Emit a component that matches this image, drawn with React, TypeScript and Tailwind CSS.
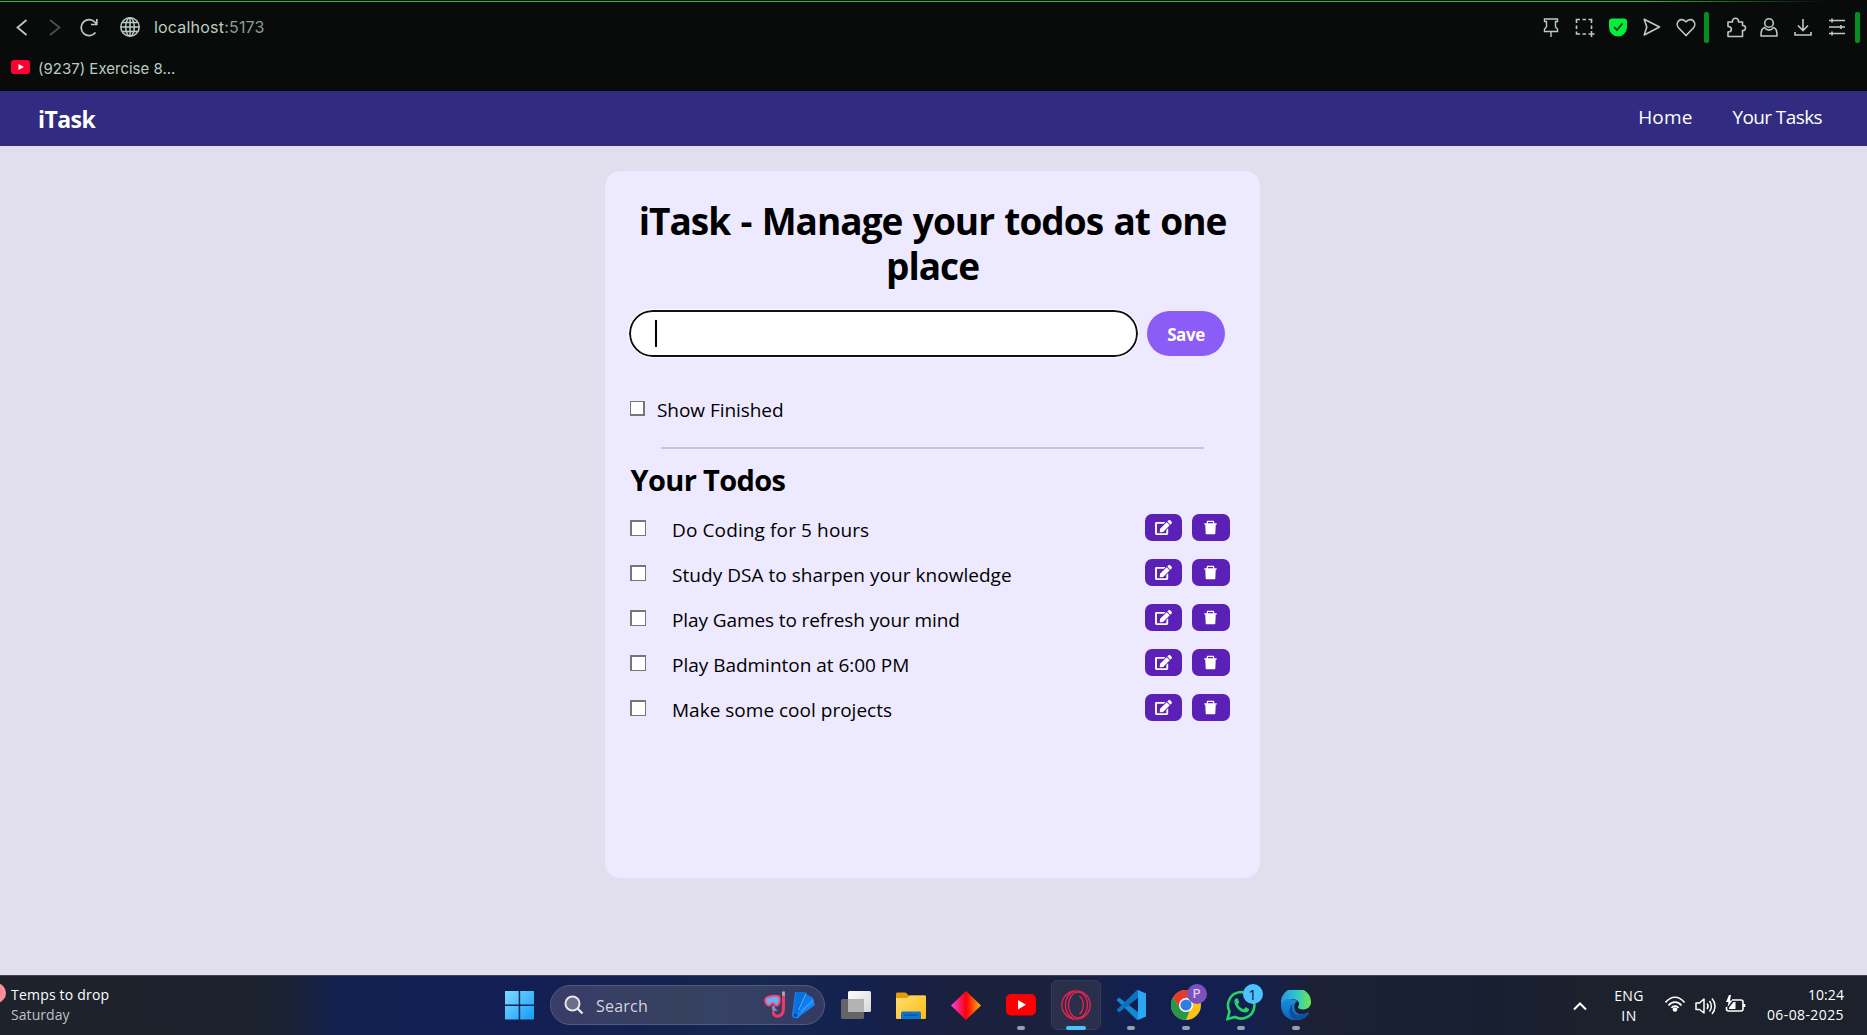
import React from "react";
import { FaEdit } from "react-icons/fa";
import { AiFillDelete } from "react-icons/ai";

const SANS = "font-['Open_Sans',sans-serif]";

const todos = [
  { text: "Do Coding for 5 hours", cls: "tracking-[0.12px]" },
  { text: "Study DSA to sharpen your knowledge", cls: "tracking-[0.04px]" },
  { text: "Play Games to refresh your mind", cls: "tracking-[-0.1px]" },
  { text: "Play Badminton at 6:00 PM", cls: "tracking-[-0.02px]" },
  { text: "Make some cool projects", cls: "tracking-[0.01px]" },
];

function Line({ children, className = "", w = 24, h = 24, sw = 1.4 }: { children: React.ReactNode; className?: string; w?: number; h?: number; sw?: number }) {
  return (
    <svg width={w} height={h} viewBox={`0 0 ${w} ${h}`} fill="none" stroke="currentColor" strokeWidth={sw} className={`shrink-0 ${className}`}>
      {children}
    </svg>
  );
}

function BrowserBar() {
  return (
    <header className="h-[91px] bg-[#080b0a] text-[#bccbc2] font-['Inter',sans-serif] flex flex-col">
      <div className="h-px" />
      <div className="h-px bg-linear-to-r from-[#13c53a] from-88% to-[#080b0a] to-98%" />
      <div className="h-[50px] flex items-center pl-[10px]">
        <Line sw={1.8}><path d="M16.500 5L7.500 12.500L16.500 20" /></Line>
        <Line className="ml-2 text-[#4a504d]" sw={1.8}><path d="M8 5L17.500 12.500L8 20" /></Line>
        <Line className="ml-[11px]" sw={1.7}><path d="M18.500 17.500A8 8 0 1 1 18.300 7.500L19.500 9M19.800 4V9.500H14" /></Line>
        <Line className="ml-[17px]" sw={1.5}>
          <circle cx="12" cy="12" r="9.200" />
          <ellipse cx="12" cy="12" rx="4.300" ry="9.200" />
          <path d="M12 2.800V21.200M3 12H21M4.300 7.500H19.700M4.300 16.500H19.700" />
        </Line>
        <span className="ml-[12px] text-[16px] tracking-[0.2px] leading-6">localhost<span className="text-[#8a9e92]">:5173</span></span>
        <div className="ml-auto flex items-center pr-[7px]">
          <Line className="mr-[10px]"><path d="M5.500 4H18.500V6.500H16.500V12L18.500 14V16.500H5.500V14L7.500 12V6.500H5.500ZM12 16.500V22" /></Line>
          <Line className="mr-[9px]" sw={1.6}><path d="M3.500 8V4.500H7M9.500 4.500H13M15.500 4.500H18.500V8M18.500 10.500V14M3.500 10.500V14M3.500 16.500V19H7M9.500 19H13M18.500 16V22M15.500 19H21.500" /></Line>
          <Line className="mr-[10px]">
            <path d="M6 3.500H18A3 3 0 0 1 21 6.500V12A9 9.500 0 0 1 3 12V6.500A3 3 0 0 1 6 3.500Z" fill="#00f03c" stroke="none" />
            <path d="M8 12L11 15L16.500 8.500" stroke="#0b2a13" strokeWidth="1.700" />
          </Line>
          <Line className="mr-[10px]" sw={1.6}><path d="M4.200 4.200L19.500 12L4.200 20L6.800 12Z" strokeLinejoin="round" /></Line>
          <Line className="mr-[6px]" sw={1.6}><path d="M12 20.500L4.500 12.800C0.500 8 6.500 1 12 6.800C17.500 1 23.500 8 19.500 12.800Z" /></Line>
          <div className="w-[5px] h-[31px] rounded-[2px] bg-[#048f22] mr-[15px]" />
          <Line className="mr-[9px]" sw={1.6}><path d="M4 7H8.500C7.500 2 15.500 2 14.500 7H18.500V10.500C22.500 10 22.500 16 18.500 15.500V21.500H4V17C8.500 17 8.500 11.500 4 11.500Z" strokeLinejoin="round" /></Line>
          <Line className="mr-[10px]" sw={1.6}><circle cx="12" cy="8" r="4.300" /><path d="M7.500 12.500C5 13.500 4 15 4 21H20C20 15 19 13.500 16.500 12.500C14 16 10 16 7.500 12.500Z" strokeLinejoin="round" /></Line>
          <Line className="mr-[10px]" sw={1.6}><path d="M12 4V15M7 10.500L12 15.500L17 10.500M4 17V20H20V17" /></Line>
          <Line className="mr-[6px]" sw={1.6}><path d="M4 5.500H20M4 12H20M4 18.500H20M7 3.500V7.500M16 10V14M7 16.500V20.500" /></Line>
          <div className="w-[5px] h-[31px] rounded-[2px] bg-[#048f22]" />
        </div>
      </div>
      <div className="h-[34px] flex items-center pl-[11px]">
        <div className="w-[19px] h-[14px] mb-[4px] rounded-[3px] bg-[#ff0033] flex items-center justify-center">
          <svg width="6" height="6" viewBox="0 0 6 6"><path d="M0.500 0L6 3L0.500 6Z" fill="#fff" /></svg>
        </div>
        <span className="ml-2 text-[15px] leading-6">(9237) Exercise 8...</span>
      </div>
    </header>
  );
}

function NavBar() {
  return (
    <nav className={`h-[55px] bg-[#312c81] text-white flex items-center justify-between pl-[38px] pr-[45px] ${SANS}`}>
      <span className="font-bold text-[23px] tracking-[-0.54px] leading-[30px] pt-[1px]">iTask</span>
      <div className="flex gap-10 text-[19px] leading-[26px] pb-[3px]">
        <span className="tracking-[0.16px]">Home</span>
        <span className="tracking-[-0.6px]">Your Tasks</span>
      </div>
    </nav>
  );
}

function TodoCard() {
  return (
    <section className={`w-[655px] h-[707px] mx-auto mt-[25px] rounded-[15px] bg-[#ede9fe] text-black px-[25px] pt-[27px] -translate-x-[1px] ${SANS}`}>
      <h1 className="text-center font-bold text-[37px] leading-[45px] tracking-[-0.98px] [word-spacing:1.7px] whitespace-nowrap">
        iTask - Manage your todos at one
        <br />
        place
      </h1>
      <div className="mt-[22px] flex items-center h-[47px]">
        <div className="w-[509px] -ml-px h-[47px] rounded-full border-2 border-[#101010] bg-white flex items-center pl-[24px] outline outline-white">
          <div className="w-[2px] h-[27px] bg-black" />
        </div>
        <button className="ml-[9px] w-[78px] h-[45px] rounded-full bg-[#8b5cf6] text-white font-bold text-[17px] tracking-[-0.43px] pt-[2px]">Save</button>
      </div>
      <label className="mt-[37px] h-[30px] flex items-center">
        <span className="w-[15px] h-[15px] -mt-px border border-r-2 border-b-2 border-[#767676] bg-white" />
        <span className="ml-[12px] pt-[2px] text-[19px] leading-[30px] tracking-[-0.05px]">Show Finished</span>
      </label>
      <div className="mt-[23px] ml-[31px] w-[543px] h-[2px] bg-[#c9c5d9]" />
      <h2 className="mt-[8px] font-bold text-[29px] leading-[45px] tracking-[-0.65px] pl-[0.5px]">Your Todos</h2>
      <ul className="mt-[12px] flex flex-col gap-[15px]">
        {todos.map((t) => (
          <li key={t.text} className="h-[30px] flex items-start">
            <span className="mt-[6px] w-[16px] h-[16px] border border-t-2 border-l-2 border-[#767676] bg-white" />
            <span className={`ml-[26px] mt-px text-[19px] leading-[30px] ${t.cls}`}>{t.text}</span>
            <div className="ml-auto mr-[5px] flex gap-[10px] text-white">
              <button className="w-[37px] h-[27px] rounded-[7px] bg-[#5b21b6] flex items-center justify-center">
                <FaEdit className="w-[17px] h-[15px]" />
              </button>
              <button className="w-[38px] h-[27px] rounded-[7px] bg-[#5b21b6] flex items-center justify-center pr-[2px]">
                <AiFillDelete className="size-[17px]" />
              </button>
            </div>
          </li>
        ))}
      </ul>
    </section>
  );
}

function Slot({ children, running, active }: { children: React.ReactNode; running?: boolean; active?: boolean }) {
  return (
    <div className="w-[55px] h-[60px] flex justify-center">
      <div className={`relative w-[50px] h-[50px] mt-[4px] rounded-[6px] flex items-center justify-center ${active ? "bg-[#2a2f4c] border border-[#363b57]" : ""}`}>
        {children}
        {running && <span className="absolute bottom-0 left-1/2 -translate-x-1/2 w-[8px] h-[4px] rounded-full bg-[#9a9dac]" />}
        {active && <span className="absolute -bottom-px left-1/2 -translate-x-1/2 w-[20px] h-[4px] rounded-full bg-[#4cc2ff]" />}
      </div>
    </div>
  );
}

function Diving() {
  return (
    <svg width="52" height="28" viewBox="0 0 52 28" fill="none">
      <path d="M20.500 4V17C20.500 27.500 10.500 26.500 10.300 21.500" stroke="#f0386b" strokeWidth="3" strokeLinecap="round" />
      <path d="M20.500 0.500V4.500" stroke="#b9a5bd" strokeWidth="2.800" />
      <path d="M3 7C6 5 13 4 16 5.500C18 9 16 14.500 13.500 14.500C11.500 14.500 11 11.800 9.500 12C8 12.200 8 15 5.500 14.500C3 14 1 9.500 3 7Z" fill="#62b2f7" stroke="#fb447a" strokeWidth="2" />
      <path d="M8.500 15L12 14.500V17L15 20H9.500" fill="#8b86ae" />
      <path d="M32 1L43 1.500L37 17L49.500 6L52 14L37 25C35.500 28.500 29 28 29 24Z" fill="#1485f5" />
      <path d="M33 1L30.500 21L36 22L43.500 2L40 1Z" fill="#0b6fdc" />
      <path d="M43 3L49.500 6.500L37 21L36 18Z" fill="#0f7cee" />
      <path d="M43 2.500L35.500 19M50.500 9L37.500 21" stroke="#4bb0ff" strokeWidth="1" />
      <circle cx="32.500" cy="24" r="2" fill="#0647a6" />
    </svg>
  );
}

function Taskbar() {
  return (
    <footer className={`h-[60px] shrink-0 border-t border-[#3c4456] flex items-start overflow-hidden text-white bg-[linear-gradient(90deg,#1e222b_0px,#1d222c_240px,#192235_290px,#12214f_335px,#131f54_500px,#14224f_680px,#152850_760px,#13214f_850px,#1b203d_960px,#1b203d_1050px,#13204f_1130px,#13204f_1250px,#1b2037_1310px,#181f31_1500px,#1c212c_1580px,#1c212c_1867px)] ${SANS}`}>
      <div className="w-[504px] h-[59px] flex items-start">
        <span className="w-[20px] h-[20px] -ml-[14px] mt-[7px] rounded-full bg-[#ff8d97]" />
        <div className="ml-[5px] mt-[9px] text-[14px] leading-5">
          <div className="tracking-[0.2px]">Temps to drop</div>
          <div className="text-[#bfc1c5] tracking-[0.06px]">Saturday</div>
        </div>
      </div>
      <svg className="mt-[14px] ml-[1px]" width="29" height="30" viewBox="0 0 29 30">
        <defs>
          <linearGradient id="win" x1="0" y1="0" x2="1" y2="1" gradientUnits="objectBoundingBox">
            <stop offset="0" stopColor="#7fdcff" />
            <stop offset="1" stopColor="#109cfa" />
          </linearGradient>
          <mask id="panes"><path d="M0 1H13.700V14.500H0ZM15.200 1H29V14.500H15.200ZM0 16H13.700V29.500H0ZM15.200 16H29V29.500H15.200Z" fill="#fff" /></mask>
        </defs>
        <rect width="29" height="30" rx="1" fill="url(#win)" mask="url(#panes)" />
      </svg>
      <div className="ml-[16px] mt-[9px] w-[275px] h-[40px] rounded-full border border-[#535b7d] bg-[linear-gradient(90deg,#393c68,#36415f_50%,#364264_60%,#353963)] flex items-center pl-[13px] pr-[9px]">
        <svg width="20" height="20" viewBox="0 0 20 20" fill="none" stroke="#e6e6ea" strokeWidth="2">
          <circle cx="8.500" cy="8.500" r="7" fill="#6a6d89" />
          <path d="M13.500 13.500L18.500 18.500" strokeWidth="2.400" />
        </svg>
        <span className="ml-[12px] pt-px text-[16px] tracking-[0.23px] text-[#d3d5de]">Search</span>
        <span className="ml-auto"><Diving /></span>
      </div>
      <div className="ml-[3px] flex">
        <Slot>
          <svg width="30" height="28" viewBox="0 0 30 28">
            <defs><linearGradient id="tv" x1="0" y1="0" x2="1" y2="1"><stop offset="0" stopColor="#fff" /><stop offset="1" stopColor="#d6d6d6" /></linearGradient></defs>
            <rect y="8" width="23" height="20" rx="1.500" fill="#646464" />
            <rect x="7" width="23" height="21" rx="1.500" fill="url(#tv)" />
            <path d="M7 8H23V21H7Z" fill="#b3b3b3" />
          </svg>
        </Slot>
        <Slot>
          <svg width="30" height="27" viewBox="0 0 30 27">
            <defs><linearGradient id="fo" x1="0" y1="0" x2="1" y2="1"><stop offset="0" stopColor="#ffdf74" /><stop offset="1" stopColor="#fdb813" /></linearGradient></defs>
            <path d="M0 8V2C0 1 .7.500 1.500.500H9.500L13 3.500H29V8Z" fill="#e19c06" />
            <path d="M0 6H11L14 3.500H29C29.600 3.500 30 4 30 4.500V26C30 26.500 29.600 27 29 27H1C.4 27 0 26.500 0 26Z" fill="url(#fo)" />
            <path d="M5 27V21.500C5 20 6 19.500 7 19.500H23C24 19.500 25 20 25 21.500V27Z" fill="#0d74cb" />
            <path d="M8.500 23.200H21.500" stroke="#07488c" strokeWidth="1.200" />
          </svg>
        </Slot>
        <Slot>
          <svg width="30" height="29" viewBox="0 0 30 29">
            <defs><linearGradient id="di"><stop offset="0" stopColor="#f04be8" /><stop offset=".48" stopColor="#fb0012" /><stop offset=".56" stopColor="#fa1208" /><stop offset="1" stopColor="#f9b80a" /></linearGradient></defs>
            <path d="M15 0L30 14.500L15 29L0 14.500Z" fill="url(#di)" />
          </svg>
        </Slot>
        <Slot running>
          <svg width="30" height="22" viewBox="0 0 30 22"><rect width="30" height="21.500" rx="5" fill="#f00" /><path d="M12 6L20 10.700L12 15.500Z" fill="#fff" /></svg>
        </Slot>
        <Slot active>
          <svg width="30" height="30" viewBox="0 0 30 30" fill="none" stroke="#f0224f" strokeWidth="1.300">
            <circle cx="15" cy="15" r="14.200" />
            <ellipse cx="17" cy="15" rx="9.500" ry="12.800" />
            <path d="M13 1.200C1.500 5 1.500 25 13 28.800M18.500 6C23.500 10 23.500 20 18.500 24" />
          </svg>
        </Slot>
        <Slot running>
          <svg width="30" height="30" viewBox="0 0 30 30">
            <path d="M.5 10L3 7.500L22.500 22.500V29.500L21 30Z" fill="#1389d3" />
            <path d="M.5 20L21 0H22.500V7.500L3 22.500Z" fill="#0b73bd" />
            <path d="M22 0L30 3.500V26.500L22 30Z" fill="#2ba7f2" />
          </svg>
        </Slot>
        <Slot running>
          <svg width="30" height="30" viewBox="0 0 30 30">
            <circle cx="15" cy="15" r="15" fill="#fbc116" />
            <path d="M2 7.500A15 15 0 0 1 28 7.500H15L9 18.500Z" fill="#e33b2e" />
            <path d="M2 7.500L9 18.500C11 22 15 22.500 18.500 21L15 30A15 15 0 0 1 2 7.500Z" fill="#279847" />
            <circle cx="15" cy="15" r="7" fill="#fff" />
            <circle cx="15" cy="15" r="5.600" fill="#2f7de9" />
          </svg>
          <span className="absolute top-[4px] left-[26px] size-[20px] rounded-full bg-[#7b52bd] text-[#dccbf7] text-[12px] leading-[20px] text-center font-['Roboto',sans-serif] font-medium">P</span>
        </Slot>
        <Slot running>
          <svg className="ml-px" width="31" height="31" viewBox="0 0 31 31">
            <path d="M1.500 29L3.500 21.500A13.200 13.200 0 1 1 9 27Z" fill="none" stroke="#25d366" strokeWidth="2.600" />
            <path d="M8.500 10C10 7.500 11.500 8 12 9L13.200 12C13.400 13 11.800 14 12 14.500C13 16.800 15.500 18.800 17.500 19.200C18.200 19.200 19 17 20 17.300L23 19C23.500 20 22 22.500 19.500 22.500C14 22.500 7.500 16 8.500 10Z" fill="#25d366" />
          </svg>
          <span className="absolute top-[4px] left-[27px] size-[20px] rounded-full bg-[#4cc2ff] text-[#10202c] text-[15px] leading-[20px] text-center">1</span>
        </Slot>
        <Slot running>
          <svg width="30" height="30" viewBox="0 0 30 30">
            <defs>
              <linearGradient id="e1"><stop offset="0" stopColor="#2398dc" /><stop offset=".5" stopColor="#31c5cf" /><stop offset="1" stopColor="#6be84b" /></linearGradient>
              <linearGradient id="e2" x1="0" y1="0" x2="0" y2="1"><stop offset="0" stopColor="#1b8ddb" /><stop offset="1" stopColor="#0c66b7" /></linearGradient>
            </defs>
            <path d="M0 13A15 14 0 0 1 30 11C30.500 17 26 19.500 22 19.500C18 19.500 16 18 17.500 16C20 11 14 9 10 9C5 9 1 12 0 15Z" fill="url(#e1)" />
            <path d="M0 14.500C1 8.500 12 7 16.500 11.500C13 12 12 18 15 22C18 25 23 25 27 22.500C28.500 22 28 23.500 27 24.500A15 15 0 0 1 0 14.500Z" fill="url(#e2)" />
            <path d="M12 14C9.500 18 12 23.500 16 24.800C20 26 24 25 27.500 22.500C25.500 27 20 30 15 30C7 28 6.500 18 12 14Z" fill="#0d4f9d" />
          </svg>
        </Slot>
      </div>
      <div className="ml-auto h-[59px] flex items-center text-[14px] leading-5">
        <Line className="mr-[25px]" w={16} h={10} sw={2}><path d="M2 8.500L8 2.500L14 8.500" /></Line>
        <div className="w-[32px] text-center">
          <div className="tracking-[0.34px]">ENG</div>
          <div className="tracking-[0.6px]">IN</div>
        </div>
        <Line className="ml-[19px] -mt-[3px]" w={22} h={18} sw={1.700}>
          <path d="M1.500 7.500C7 .5 15 .5 20.500 7.500M4.500 10.500C8 6 14 6 17.500 10.500M7.500 13C9 10.500 13 10.500 14.500 13" />
          <circle cx="11" cy="14.500" r="1.500" fill="currentColor" />
        </Line>
        <Line className="ml-[9px]" w={21} h={18} sw={1.500}>
          <path d="M1 6H4.500L9 2V16L4.500 12.500H1ZM12 6.500C13.200 8 13.200 10.500 12 12M14.500 4C17 7 17 11.500 14.500 14.500M17 1.500C21 6 21 12.500 17 17" strokeLinejoin="round" />
        </Line>
        <Line className="ml-[9px] -mt-[3px]" w={21} h={19} sw={1.600}>
          <path d="M7 5H16A2 2 0 0 1 18 7V14A2 2 0 0 1 16 16H3.500A2 2 0 0 1 1.500 14V12M19.500 9V12" />
          <path d="M4 0L1 7H3.500L2.500 12L7.500 5.500H5L6 0Z" fill="currentColor" stroke="none" />
          <path d="M4 12.500L8.500 7H10.500V14H4Z" fill="currentColor" stroke="none" />
        </Line>
        <div className="ml-[19px] mr-[23px] w-[79px] text-right -mt-[2px]">
          <div className="tracking-[0.08px]">10:24</div>
          <div className="tracking-[0.4px]">06-08-2025</div>
        </div>
      </div>
    </footer>
  );
}

export default function App() {
  return (
    <div className="w-[1867px] h-[1035px] overflow-hidden flex flex-col bg-[#e1dfed]">
      <BrowserBar />
      <NavBar />
      <main className="flex-1 min-h-0">
        <TodoCard />
      </main>
      <Taskbar />
    </div>
  );
}
